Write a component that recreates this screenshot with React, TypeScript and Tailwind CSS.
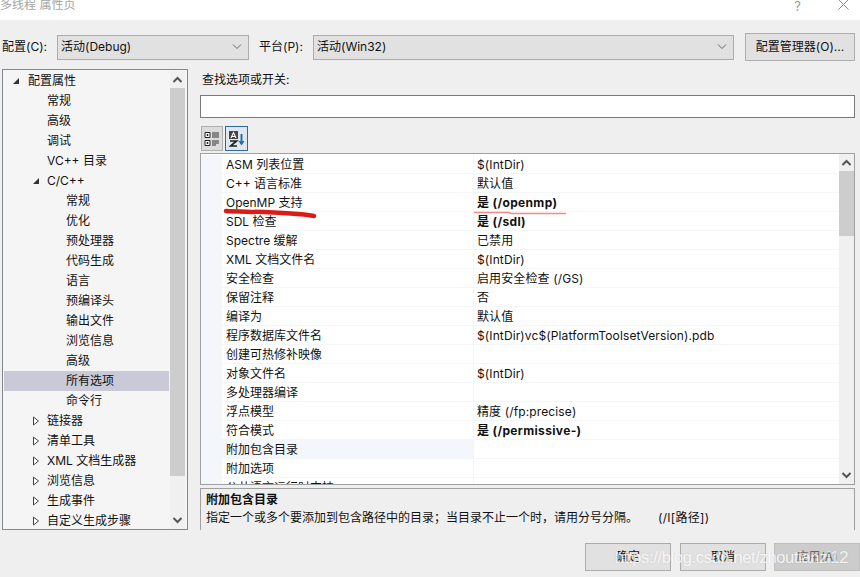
const FONT = `font-['Inter','Noto_Sans_CJK_SC',sans-serif]`;

type TreeRow = {
  label: string;
  depth: 0 | 1 | 2;
  arrow?: "open" | "closed";
  selected?: boolean;
};

const TREE_ROWS: TreeRow[] = [
  { label: "配置属性", depth: 0, arrow: "open" },
  { label: "常规", depth: 1 },
  { label: "高级", depth: 1 },
  { label: "调试", depth: 1 },
  { label: "VC++ 目录", depth: 1 },
  { label: "C/C++", depth: 1, arrow: "open" },
  { label: "常规", depth: 2 },
  { label: "优化", depth: 2 },
  { label: "预处理器", depth: 2 },
  { label: "代码生成", depth: 2 },
  { label: "语言", depth: 2 },
  { label: "预编译头", depth: 2 },
  { label: "输出文件", depth: 2 },
  { label: "浏览信息", depth: 2 },
  { label: "高级", depth: 2 },
  { label: "所有选项", depth: 2, selected: true },
  { label: "命令行", depth: 2 },
  { label: "链接器", depth: 1, arrow: "closed" },
  { label: "清单工具", depth: 1, arrow: "closed" },
  { label: "XML 文档生成器", depth: 1, arrow: "closed" },
  { label: "浏览信息", depth: 1, arrow: "closed" },
  { label: "生成事件", depth: 1, arrow: "closed" },
  { label: "自定义生成步骤", depth: 1, arrow: "closed" },
];

type Option = { name: string; value?: string; bold?: boolean; hot?: boolean };

const OPTIONS: Option[] = [
  { name: "ASM 列表位置", value: "$(IntDir)" },
  { name: "C++ 语言标准", value: "默认值" },
  { name: "OpenMP 支持", value: "是 (/openmp)", bold: true },
  { name: "SDL 检查", value: "是 (/sdl)", bold: true },
  { name: "Spectre 缓解", value: "已禁用" },
  { name: "XML 文档文件名", value: "$(IntDir)" },
  { name: "安全检查", value: "启用安全检查 (/GS)" },
  { name: "保留注释", value: "否" },
  { name: "编译为", value: "默认值" },
  { name: "程序数据库文件名", value: "$(IntDir)vc$(PlatformToolsetVersion).pdb" },
  { name: "创建可热修补映像" },
  { name: "对象文件名", value: "$(IntDir)" },
  { name: "多处理器编译" },
  { name: "浮点模型", value: "精度 (/fp:precise)" },
  { name: "符合模式", value: "是 (/permissive-)", bold: true },
  { name: "附加包含目录", hot: true },
  { name: "附加选项" },
  { name: "公共语言运行时支持" },
];

function Chevron({ up = false }: { up?: boolean }) {
  return (
    <svg width="11" height="7" viewBox="0 0 11 7" fill="none" stroke="#555" strokeWidth="2">
      <path d={up ? "M1.5 6 5.5 2 9.5 6" : "M1.5 1 5.5 5 9.5 1"} />
    </svg>
  );
}

function Combo({ text, className }: { text: string; className: string }) {
  return (
    <div className={`flex h-[25px] items-center justify-between border border-[#acacac] bg-[#e1e1e1] pl-[3px] pr-[3px] ${className}`}>
      <span>{text}</span>
      <svg width="14" height="8" viewBox="0 0 14 8" fill="none" stroke="#666" strokeWidth="1" className="mr-[1px]">
        <path d="M3 1.5 7 5.5 11 1.5" />
      </svg>
    </div>
  );
}

function Scrollbar({ thumb, width }: { thumb: string; width: string }) {
  return (
    <div className={`flex shrink-0 flex-col bg-[#f0f0f0] ${width}`}>
      <div className="flex h-[17px] shrink-0 items-center justify-center">
        <Chevron up />
      </div>
      <div className="min-h-0 flex-1">
        <div className={`bg-[#cdcdcd] ${thumb}`} />
      </div>
      <div className="flex h-[17px] shrink-0 items-center justify-center">
        <Chevron />
      </div>
    </div>
  );
}

function TreeArrow({ kind }: { kind: "open" | "closed" }) {
  return (
    <svg width="8" height="10" viewBox="0 0 8 10" className="shrink-0">
      {kind === "open" ? (
        <path d="M7 2V8H1Z" fill="#333" />
      ) : (
        <path d="M1.5 1 6.5 5 1.5 9Z" fill="#fff" stroke="#444" />
      )}
    </svg>
  );
}

function Tree() {
  return (
    <div className="flex h-[461px] w-[186px] border border-[#828790] bg-[#f5f5f5] pl-[1px] pt-[1px]">
      <div className="mr-[1px] w-[165px] shrink-0 overflow-hidden">
        {TREE_ROWS.map((row, i) => (
          <div
            key={i}
            className={`flex h-5 items-center ${row.selected ? "bg-[#c9c9d8]" : ""} ${
              row.depth === 0 ? "pl-[8px]" : row.depth === 1 ? "pl-[28px]" : "pl-[62px]"
            }`}
          >
            {row.arrow && <TreeArrow kind={row.arrow} />}
            <span className={row.depth === 0 ? "ml-[8px]" : row.depth === 1 ? (row.arrow ? "ml-[7px]" : "ml-[15px]") : ""}>
              {row.label}
            </span>
          </div>
        ))}
      </div>
      <Scrollbar width="w-[15px]" thumb="h-[388px]" />
    </div>
  );
}

function ToolbarIcons() {
  return (
    <div className="flex h-[25px] gap-[2px]">
      <div className="flex w-[22px] items-center justify-center border border-[#b0b0b0] bg-[#dcdcdc]">
        <svg width="16" height="16" viewBox="0 0 16 16">
          <path d="M1 1.5h5v5H1zM1 9.5h5v5H1z" fill="#fff" stroke="#222" />
          <path d="M2.5 4h2M3.5 3v2M2.5 12h2M3.5 11v2" stroke="#222" />
          <path d="M8 2h7M8 4h7M8 6h7M8 10h7M8 12h7M8 14h4" stroke="#333" />
        </svg>
      </div>
      <div className="flex w-[23px] items-center justify-center border border-[#2a6aa5] bg-[#dfe6ee]">
        <svg width="16" height="18" viewBox="0 0 16 18">
          <rect x="0" y="1" width="9" height="8" fill="#444" />
          <path d="M2 8 4.5 2.5 7 8M3 6.5h3" fill="none" stroke="#fff" strokeWidth="1.1" />
          <path d="M1 11h6.5L1.5 16H8" fill="none" stroke="#222" strokeWidth="1.7" />
          <path d="M12.5 4v10" stroke="#1e6fb5" strokeWidth="2" />
          <path d="M9.5 11h6l-3 4.5z" fill="#1e6fb5" />
        </svg>
      </div>
    </div>
  );
}

function OptionsGrid() {
  return (
    <div className="flex h-[332px] border border-[#a0a0a0] bg-white">
      <div className="min-w-0 flex-1 overflow-hidden pt-[1px]">
        {OPTIONS.map((opt, i) => (
          <div key={i} className="flex h-[19px] shrink-0">
            <div className="w-[21px] shrink-0 bg-[#f3f6fb]" />
            <div
              className={`flex w-[252px] shrink-0 items-center border-b border-r border-[#f3f6fb] pl-[4px] pt-[2px] ${
                opt.hot ? "bg-[#f3f6fb]" : ""
              }`}
            >
              {opt.name}
            </div>
            <div
              className={`flex flex-1 items-center border-b border-[#f3f6fb] pl-[3px] pt-[2px] ${
                opt.bold ? "font-bold tracking-[0.35px]" : "tracking-[0.12px]"
              }`}
            >
              {opt.value}
            </div>
          </div>
        ))}
      </div>
      <Scrollbar width="w-[15px]" thumb="h-[65px]" />
    </div>
  );
}

function FooterButton({ label, disabled = false }: { label: string; disabled?: boolean }) {
  return (
    <div
      className={`flex h-[28px] w-[86px] items-center justify-center border ${
        disabled ? "border-[#bfbfbf] bg-[#cccccc] text-[#666]" : "border-[#adadad] bg-[#e1e1e1]"
      }`}
    >
      {label}
    </div>
  );
}

export default function App() {
  return (
    <div className={`relative flex h-[577px] w-[860px] flex-col overflow-hidden bg-[#efefef] text-[12px] leading-none text-[#111] ${FONT}`}>
      {/* Title bar */}
      <div className="flex h-5 shrink-0 items-start justify-between overflow-hidden bg-white">
        <span className="-mt-[5px] text-[12px] leading-[20px] text-[#a5a5a5]">多线程 属性页</span>
        <div className="mr-[11px] flex items-start gap-[37px] text-[#9a9a9a]">
          <span className="-mt-[2px] text-[13px] leading-[16px]">?</span>
          <svg width="11" height="11" viewBox="0 0 11 11" stroke="#8a8a8a" className="-mt-[1px]">
            <path d="M.5.5 10.5 10.5M10.5.5.5 10.5" />
          </svg>
        </div>
      </div>

      {/* Configuration and platform selectors */}
      <div className="flex shrink-0 items-center pl-[2px] pr-[5px] pt-[13px]">
        <span className="w-[55px]">配置(C):</span>
        <Combo text="活动(Debug)" className="w-[192px]" />
        <span className="ml-[10px] w-[54px]">平台(P):</span>
        <Combo text="活动(Win32)" className="w-[421px]" />
        <div className="ml-[11px] flex h-[28px] w-[110px] items-center justify-center border border-[#adadad] bg-[#e1e1e1]">
          配置管理器(O)...
        </div>
      </div>

      <div className="flex min-h-0 flex-1 pl-[2px] pr-[5px] pt-[8px]">
        <Tree />

        <div className="ml-[12px] flex min-w-0 flex-1 flex-col">
          <div className="flex h-[26px] items-center pl-[2px] pb-[10px] pt-[6px]">查找选项或开关:</div>
          <div className="h-[23px] border border-[#7a7a7a] bg-white" />
          <div className="mb-[2px] mt-[8px] pl-[1px]">
            <ToolbarIcons />
          </div>
          <OptionsGrid />

          {/* Description of the focused option */}
          <div className="mt-[3px] h-[42px] border-x border-t border-[#a0a0a0] pl-[5px] pt-[5px]">
            <div className="mb-[6px] font-bold">附加包含目录</div>
            <div className="flex whitespace-pre">
              <span>指定一个或多个要添加到包含路径中的目录；当目录不止一个时，请用分号分隔。</span>
              <span className="ml-[20px] tracking-[0.3px]">(/I[路径])</span>
            </div>
          </div>
        </div>
      </div>

      {/* Dialog buttons */}
      <div className="flex h-[47px] shrink-0 justify-end pt-[13px]">
        <FooterButton label="确定" />
        <div className="ml-[9px]">
          <FooterButton label="取消" />
        </div>
        <div className="ml-[8px]">
          <FooterButton label="应用(A)" disabled />
        </div>
      </div>

      {/* Red pen marks over the OpenMP row */}
      <svg width="860" height="577" className="pointer-events-none absolute left-0 top-0">
        <path d="M226 211C250 212 290 212 314 216" fill="none" stroke="#dc1a16" strokeWidth="4.5" strokeLinecap="round" />
        <path d="M474 212.5H509L511 213.5H566" fill="none" stroke="#f08c8c" strokeWidth="1.5" />
      </svg>

      {/* Blog watermark */}
      <span className="pointer-events-none absolute left-[615px] top-[547px] whitespace-nowrap font-['Liberation_Sans',sans-serif] text-[16.5px] leading-[20px] tracking-[-0.35px] text-white/80 [text-shadow:0_0_2px_rgba(0,0,0,0.12)]">
        https://blog.csdn.net/zhoutianzi12
      </span>
    </div>
  );
}
